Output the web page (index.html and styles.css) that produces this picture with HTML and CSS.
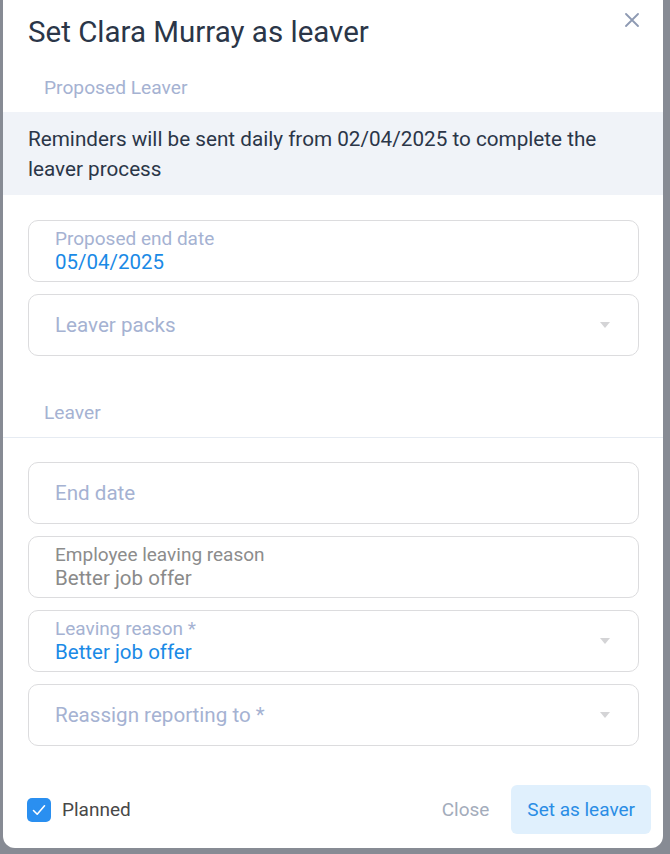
FILE: index.html
```html
<!DOCTYPE html>
<html lang="en">
<head>
<meta charset="utf-8">
<title>Set Clara Murray as leaver</title>
<link rel="stylesheet" href="styles.css">
</head>
<body>
<div class="modal">
  <div class="modal-header">
    <h1 class="title">Set Clara Murray as leaver</h1>
    <button class="close-x" aria-label="Close">
      <svg width="14" height="14" viewBox="0 0 14 14"><path d="M1 1L13 13M13 1L1 13" stroke="#8e9ab3" stroke-width="1.8" stroke-linecap="round"/></svg>
    </button>
  </div>

  <div class="section-label first">Proposed Leaver</div>
  <div class="info-band">Reminders will be sent daily from 02/04/2025 to complete the leaver process</div>

  <div class="fields top-fields">
    <div class="field">
      <div class="field-body">
        <div class="f-label">Proposed end date</div>
        <div class="f-value blue">05/04/2025</div>
      </div>
    </div>
    <div class="field">
      <div class="field-body">
        <div class="f-placeholder">Leaver packs</div>
      </div>
      <span class="caret"></span>
    </div>
  </div>

  <div class="section-label divided">Leaver</div>

  <div class="fields">
    <div class="field">
      <div class="field-body">
        <div class="f-placeholder">End date</div>
      </div>
    </div>
    <div class="field">
      <div class="field-body">
        <div class="f-label gray">Employee leaving reason</div>
        <div class="f-value gray">Better job offer</div>
      </div>
    </div>
    <div class="field">
      <div class="field-body">
        <div class="f-label">Leaving reason *</div>
        <div class="f-value blue">Better job offer</div>
      </div>
      <span class="caret"></span>
    </div>
    <div class="field">
      <div class="field-body">
        <div class="f-placeholder">Reassign reporting to *</div>
      </div>
      <span class="caret"></span>
    </div>
  </div>

  <div class="footer">
    <label class="check">
      <span class="box">
        <svg width="16" height="16" viewBox="0 0 16 16"><path d="M2.5 8.5L6.2 12.2L13.5 3.8" fill="none" stroke="#fff" stroke-width="1.6" stroke-linecap="round" stroke-linejoin="round"/></svg>
      </span>
      <span class="check-text">Planned</span>
    </label>
    <div class="actions">
      <button class="btn-text">Close</button>
      <button class="btn-primary">Set as leaver</button>
    </div>
  </div>
</div>
</body>
</html>
```
FILE: styles.css
```css
* { box-sizing: border-box; }
html, body { margin: 0; padding: 0; }
body {
  background: #878b94;
  font-family: Roboto, "Liberation Sans", sans-serif;
  width: 670px;
  height: 854px;
  overflow: hidden;
}
.modal {
  margin-left: 3px;
  width: 660px;
  height: 848px;
  background: #fff;
  border-radius: 0 0 12px 12px;
  display: flex;
  flex-direction: column;
}
.modal-header {
  display: flex;
  justify-content: space-between;
  align-items: flex-start;
  padding: 13px 24px 0 25px;
}
.title {
  margin: 0;
  font-size: 29.5px;
  line-height: 38px;
  font-weight: 400;
  color: #2b3648;
}
.close-x {
  background: none;
  border: 0;
  padding: 0;
  margin-top: 0;
  width: 14px;
  height: 14px;
  display: flex;
}
.section-label {
  font-size: 19.2px;
  line-height: 24px;
  color: #a5b2d2;
  padding-left: 41px;
}
.section-label.first {
  margin-top: 25px;
  margin-bottom: 12px;
}
.section-label.divided {
  margin-top: 45px;
  padding-bottom: 12px;
  border-bottom: 1px solid #e6ebf2;
}
.info-band {
  background: #f0f3f8;
  padding: 12px 50px 11px 25px;
  font-size: 20.7px;
  line-height: 30px;
  color: #2b3648;
}
.fields {
  display: flex;
  flex-direction: column;
  gap: 12px;
  padding: 24px 24px 0 25px;
}
.top-fields { padding-top: 25px; }
.field {
  height: 62px;
  border: 1px solid #dcdcde;
  border-radius: 10px;
  display: flex;
  align-items: center;
  padding: 0 28px 0 26px;
}
.field-body { flex: 1; }
.f-label {
  font-size: 19px;
  line-height: 22px;
  color: #a5b2d2;
}
.f-label.gray { color: #8c8c8c; }
.f-value {
  font-size: 20.5px;
  line-height: 24px;
}
.f-value.blue { color: #1a8ae6; }
.f-value.gray { color: #8a8a8a; }
.f-placeholder {
  font-size: 20.6px;
  line-height: 24px;
  color: #a5b2d2;
}
.caret {
  width: 0;
  height: 0;
  border-left: 5px solid transparent;
  border-right: 5px solid transparent;
  border-top: 6px solid #d4d4d6;
}
.footer {
  margin-top: auto;
  display: flex;
  justify-content: space-between;
  align-items: center;
  padding: 0 12px 14px 24px;
}
.check {
  display: flex;
  align-items: center;
  gap: 11px;
}
.box {
  width: 24px;
  height: 24px;
  border-radius: 5px;
  background: #2a8ff0;
  display: flex;
  align-items: center;
  justify-content: center;
}
.check-text {
  font-size: 19px;
  color: #484848;
}
.actions {
  display: flex;
  align-items: center;
  gap: 22px;
}
.btn-text {
  background: none;
  border: 0;
  padding: 0;
  font-family: inherit;
  font-size: 19px;
  color: #a3acbb;
}
.btn-primary {
  background: #e0f0fd;
  border: 0;
  border-radius: 6px;
  height: 49px;
  padding: 0 16px;
  font-family: inherit;
  font-size: 19px;
  color: #2a8de5;
}
```
